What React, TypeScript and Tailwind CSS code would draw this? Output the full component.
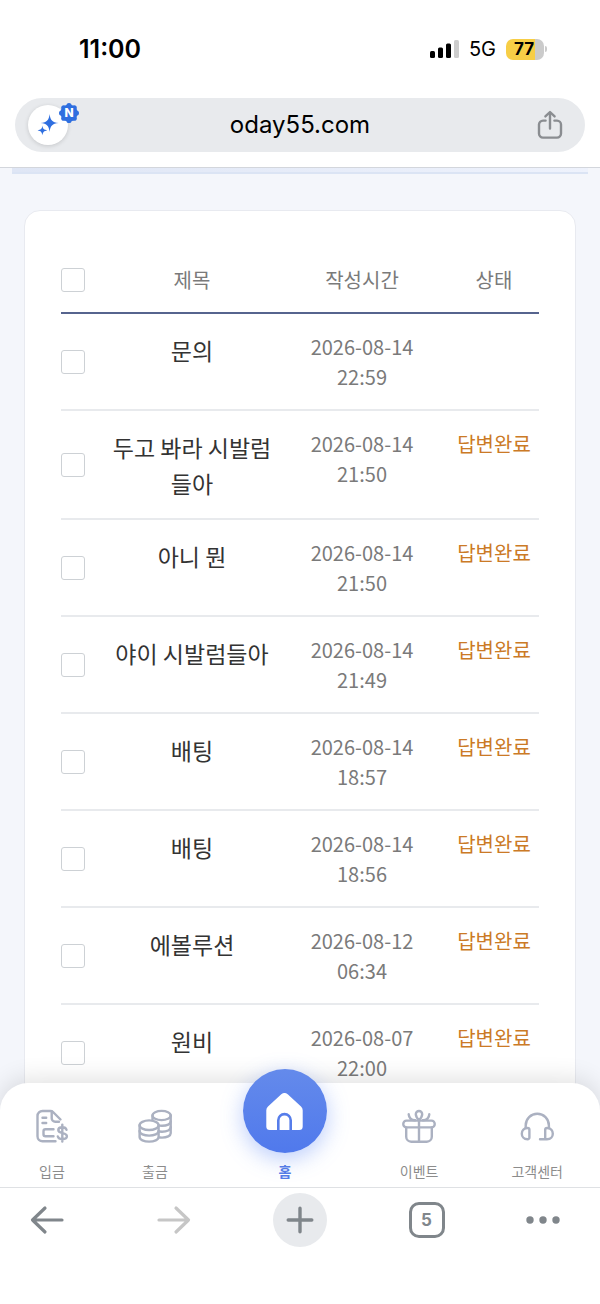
import { ReactNode } from "react";

type TInquiry = {
  id: number;
  title: string;
  date: string;
  time: string;
  status?: string;
};

const inquiries: TInquiry[] = [
  { id: 1, title: "문의", date: "2026-08-14", time: "22:59" },
  { id: 2, title: "두고 봐라 시발럼 들아", date: "2026-08-14", time: "21:50", status: "답변완료" },
  { id: 3, title: "아니 뭔", date: "2026-08-14", time: "21:50", status: "답변완료" },
  { id: 4, title: "야이 시발럼들아", date: "2026-08-14", time: "21:49", status: "답변완료" },
  { id: 5, title: "배팅", date: "2026-08-14", time: "18:57", status: "답변완료" },
  { id: 6, title: "배팅", date: "2026-08-14", time: "18:56", status: "답변완료" },
  { id: 7, title: "에볼루션", date: "2026-08-12", time: "06:34", status: "답변완료" },
  { id: 8, title: "원비", date: "2026-08-07", time: "22:00", status: "답변완료" },
];

const StatusBar = () => (
  <div className="flex h-[98px] items-center justify-between pl-[79px] pr-[53px]">
    <span className="text-[25px] font-semibold leading-8">11:00</span>
    <div className="flex items-center">
      <svg width="29" height="18" viewBox="0 0 29 18" aria-hidden="true">
        <rect x="0" y="11" width="5" height="7" rx="1.5" />
        <rect x="8" y="7.5" width="5" height="10.5" rx="1.5" />
        <rect x="16" y="3.5" width="5" height="14.5" rx="1.5" />
        <rect x="24" y="0" width="5" height="18" rx="1.5" fill="#cdcdcd" />
      </svg>
      <span className="ml-2.5 mr-2.5 text-xl leading-6">5G</span>
      <span className="flex h-[21px] w-[38px] items-center justify-center rounded-[7px] bg-linear-to-r from-[#f7ce46] from-77% to-[#cbcbcb] to-77% pr-0.5 text-[17px] font-bold leading-none">
        77
      </span>
      <span className="ml-px h-1.5 w-0.5 rounded-r-full bg-[#cbcbcb]" />
    </div>
  </div>
);

const AddressBar = () => (
  <div className="mx-[15px] mb-[15px] flex h-[54px] items-center rounded-full bg-[#e8eaed] pl-[13px] pr-[22px]">
    <button
      type="button"
      aria-label="AI"
      className="relative flex size-10 items-center justify-center rounded-full bg-white shadow-[0_1px_4px_rgba(0,0,0,0.15)]"
    >
      <svg width="22" height="22" viewBox="0 0 22 22" fill="#2f6fe0" aria-hidden="true">
        <path d="M12.6 0C13.4 6.4 15.2 8.2 21.6 9C15.2 9.8 13.4 11.6 12.6 18C11.8 11.6 10 9.8 3.6 9C10 8.2 11.8 6.4 12.6 0Z" />
        <path d="M5.4 11.6C5.9 15 7 16 10.2 16.4C7 16.8 5.9 17.9 5.4 21.2C4.9 17.9 3.8 16.8.6 16.4C3.8 16 4.9 15 5.4 11.6Z" />
      </svg>
      <span className="absolute -right-[11px] -top-0.5 flex size-5 items-center justify-center text-[12px] font-extrabold leading-none text-white">
        <svg className="absolute inset-0" width="20" height="20" viewBox="0 0 20 20" fill="#2f6fe0" aria-hidden="true">
          <circle cx="10" cy="10" r="8.6" />
          <circle cx="10" cy="2.6" r="2.6" />
          <circle cx="15.2" cy="4.8" r="2.6" />
          <circle cx="17.4" cy="10" r="2.6" />
          <circle cx="15.2" cy="15.2" r="2.6" />
          <circle cx="10" cy="17.4" r="2.6" />
          <circle cx="4.8" cy="15.2" r="2.6" />
          <circle cx="2.6" cy="10" r="2.6" />
          <circle cx="4.8" cy="4.8" r="2.6" />
        </svg>
        <span className="relative">N</span>
      </span>
    </button>
    <input
      type="text"
      aria-label="주소"
      defaultValue="oday55.com"
      className="mr-[5px] min-w-0 flex-1 bg-transparent text-center text-2xl leading-8 outline-none"
    />
    <button type="button" aria-label="공유">
      <svg width="26" height="30" viewBox="0 0 26 30" fill="none" stroke="#8a8d91" strokeWidth="2.4" strokeLinecap="round" strokeLinejoin="round" aria-hidden="true">
        <path d="M8.6 10.6H6A4 4 0 0 0 2 14.6V23.6A4 4 0 0 0 6 27.6H20A4 4 0 0 0 24 23.6V14.6A4 4 0 0 0 20 10.6H17.4" />
        <path d="M13 18.6V2.2M8.4 6.4L13 2L17.6 6.4" />
      </svg>
    </button>
  </div>
);

const Checkbox = ({ label }: { label: string }) => (
  <input
    type="checkbox"
    aria-label={label}
    className="block size-6 appearance-none rounded-[3px] border border-[#cdd1d5] bg-white checked:bg-[#5b82ec]"
  />
);

const InquiryTable = () => (
  <table className="w-full table-fixed border-separate border-spacing-0 text-center text-xl leading-[30px] text-[#7a7a7a]">
    <colgroup>
      <col className="w-12" />
      <col />
      <col className="w-[174px]" />
      <col className="w-[90px]" />
    </colgroup>
    <thead>
      <tr className="h-[67px] *:border-b-2 *:border-[#56648e] *:p-0 *:font-normal">
        <th>
          <Checkbox label="전체 선택" />
        </th>
        <th>제목</th>
        <th>작성시간</th>
        <th>상태</th>
      </tr>
    </thead>
    <tbody>
      {inquiries.map((item) => (
        <tr key={item.id} className="*:border-b-2 *:border-[#e8eaed] *:pb-[17px] *:pt-[18px]">
          <td className="align-middle">
            <Checkbox label={item.title} />
          </td>
          <td className="break-keep align-top text-[23px] leading-9 text-[#333]">
            <a href="#">{item.title}</a>
          </td>
          <td className="px-3 align-top">
            {item.date} {item.time}
          </td>
          <td className="align-top text-[#cb7a26]">{item.status}</td>
        </tr>
      ))}
    </tbody>
  </table>
);

const NavIcon = ({ children }: { children: ReactNode }) => (
  <svg
    className="-mx-0.5 shrink-0"
    width="34"
    height="34"
    viewBox="0 0 34 34"
    fill="none"
    stroke="#abb1c1"
    strokeWidth="2.4"
    strokeLinecap="round"
    strokeLinejoin="round"
    aria-hidden="true"
  >
    {children}
  </svg>
);

const NavItem = ({ label, children }: { label: string; children: ReactNode }) => (
  <a href="#" className="flex flex-col items-center gap-[18px] whitespace-nowrap">
    <NavIcon>{children}</NavIcon>
    {label}
  </a>
);

const BottomNav = () => (
  <nav className="absolute inset-x-0 bottom-0 flex justify-between rounded-t-[28px] bg-white px-[37px] pb-1.5 pt-[26px] text-sm leading-5 text-[#8c8c8c] shadow-[0_-4px_24px_rgba(0,0,0,0.12)]">
    <NavItem label="입금">
      <path d="M20.5 32.3H7.5A5 5 0 0 1 2.5 27.3V7A5 5 0 0 1 7.5 2H15.5C16.6 2 17.3 2.3 18 3L25.5 10.5" />
      <path d="M16.7 2.5V9.2A3.5 3.5 0 0 0 20.2 12.7H24" />
      <path d="M7.5 8.7H11.2M7.5 14H11.2" />
      <path d="M18.5 20.3H10.5A2 2 0 0 0 8.5 22.3V25.3A2 2 0 0 0 10.5 27.3H18.5" />
      <path d="M27.3 15.6V32.6M31.5 20.8C31 19 29.6 18.2 27.3 18.2C25 18.2 23.3 19.1 23.3 21C23.3 25.5 31.9 22.7 31.9 27.3C31.9 29.3 29.8 30.2 27.3 30.2C25 30.2 23.3 29.3 22.8 27.5" />
    </NavItem>
    <NavItem label="출금">
      <ellipse cx="23.6" cy="6.5" rx="9.1" ry="4.6" />
      <path d="M14.5 6.5V11.5M32.7 6.5V24.2C32.7 26.8 29 28.6 24 28.6L22 28.5" />
      <path d="M32.7 12.4C32.7 15 29 16.8 24 16.8L21.5 16.6M32.7 18.3C32.7 20.9 29 22.7 24 22.7L21.5 22.5" />
      <ellipse cx="11.1" cy="16.2" rx="9.5" ry="4.8" />
      <path d="M1.6 16.2V28C1.6 30.7 6 32.6 11.1 32.6S20.6 30.7 20.6 28V16.2" />
      <path d="M1.6 22C1.6 24.8 6 26.6 11.1 26.6S20.6 24.8 20.6 22" />
    </NavItem>
    <a href="#" className="-mt-10 flex flex-col items-center gap-2 font-bold text-[#557ce6]">
      <span className="flex size-[84px] items-center justify-center rounded-full bg-linear-to-b from-[#648aeb] to-[#5079ec] shadow-[0_6px_22px_rgba(85,130,245,0.4)]">
        <svg width="37" height="37" viewBox="0 0 37 37" fill="#fff" aria-hidden="true">
          <path d="M15 1.4A5 5 0 0 1 22 1.4L35 13.6A5 5 0 0 1 36.7 17.4V33.5A3.5 3.5 0 0 1 33.2 37H3.8A3.5 3.5 0 0 1 .3 33.5V17.4A5 5 0 0 1 2 13.6Z" />
          <path d="M12.3 37V27.3A6.2 6.2 0 0 1 24.7 27.3V37" stroke="#567dea" strokeWidth="2.6" />
        </svg>
      </span>
      홈
    </a>
    <NavItem label="이벤트">
      <rect x="1.3" y="11.6" width="31.4" height="6.8" rx="3.2" />
      <path d="M4.2 18.4V27.7A5 5 0 0 0 9.2 32.7H24.8A5 5 0 0 0 29.8 27.7V18.4M17 11.6V32.5" />
      <path d="M17 11.2C14.8 8.8 13.8 7 13.8 5.2A3.2 3.2 0 0 1 20.2 5.2C20.2 7 19.2 8.8 17 11.2Z" />
      <path d="M6.7 5.3C7 8.8 9.2 11 13 11.3M27.3 5.3C27 8.8 24.8 11 21 11.3" />
    </NavItem>
    <NavItem label="고객센터">
      <path d="M5.7 19V16.4A11.6 11.6 0 0 1 28.9 16.4V19" />
      <path d="M9.4 20.8A1.8 1.8 0 0 0 7.6 19C3.7 19 1.8 22 1.8 24.7S3.7 30.3 7.6 30.3A1.8 1.8 0 0 0 9.4 28.5Z" />
      <path d="M25.2 29.8V20.8A1.8 1.8 0 0 1 27 19C31 19 32.8 22 32.8 24.7S31 30.3 27 30.3H20" />
    </NavItem>
  </nav>
);

const BrowserToolbar = () => (
  <footer className="flex h-[117px] shrink-0 items-start justify-between border-t border-[#dfe1e4] bg-white pl-5 pr-10 pt-[5px] text-[#80868b] *:flex *:h-[54px] *:w-[54px] *:items-center *:justify-center">
    <button type="button" aria-label="뒤로">
      <svg width="34" height="30" viewBox="0 0 34 30" fill="none" stroke="currentColor" strokeWidth="3.2" strokeLinecap="round" strokeLinejoin="round" aria-hidden="true">
        <path d="M32 15H2.5M15 3L2.5 15L15 27" />
      </svg>
    </button>
    <button type="button" aria-label="앞으로" className="text-[#c6c6c6]">
      <svg width="34" height="30" viewBox="0 0 34 30" fill="none" stroke="currentColor" strokeWidth="3.2" strokeLinecap="round" strokeLinejoin="round" aria-hidden="true">
        <path d="M2 15H31.5M19 3L31.5 15L19 27" />
      </svg>
    </button>
    <button type="button" aria-label="새 탭" className="rounded-full bg-[#e8eaed]">
      <svg width="28" height="28" viewBox="0 0 28 28" stroke="currentColor" strokeWidth="3.4" strokeLinecap="round" aria-hidden="true">
        <path d="M14 2.2V25.8M2.2 14H25.8" />
      </svg>
    </button>
    <button type="button" aria-label="탭 5개">
      <span className="flex size-9 items-center justify-center rounded-[10px] border-3 border-[#80868b] text-[17px] font-bold leading-none">
        5
      </span>
    </button>
    <button type="button" aria-label="더보기" className="max-w-[34px]">
      <svg width="34" height="8" viewBox="0 0 34 8" fill="currentColor" aria-hidden="true">
        <circle cx="4" cy="4" r="3.7" />
        <circle cx="17" cy="4" r="3.7" />
        <circle cx="30" cy="4" r="3.7" />
      </svg>
    </button>
  </footer>
);

const App = () => {
  return (
    <div className="flex h-screen flex-col bg-white font-['Inter','Noto_Sans_CJK_KR',sans-serif] text-black">
      <header className="shrink-0 border-b border-[#d3d6dc]">
        <StatusBar />
        <AddressBar />
      </header>
      <div className="relative min-h-0 flex-1 overflow-hidden bg-[#f4f6fb] font-['Noto_Sans_CJK_KR',sans-serif]">
        <main className="h-full overflow-y-auto pb-28 [scrollbar-width:none]">
          <div className="mx-3 h-1.5 border-b-2 border-[#dbe4f4] bg-linear-to-r from-[#dfe6f5] to-[#eef2fc]" />
          <section className="mx-6 mt-9 rounded-2xl border border-[#e8eaf0] bg-white px-9 pb-9 pt-9">
            <InquiryTable />
          </section>
        </main>
        <BottomNav />
      </div>
      <BrowserToolbar />
    </div>
  );
};

export default App;
